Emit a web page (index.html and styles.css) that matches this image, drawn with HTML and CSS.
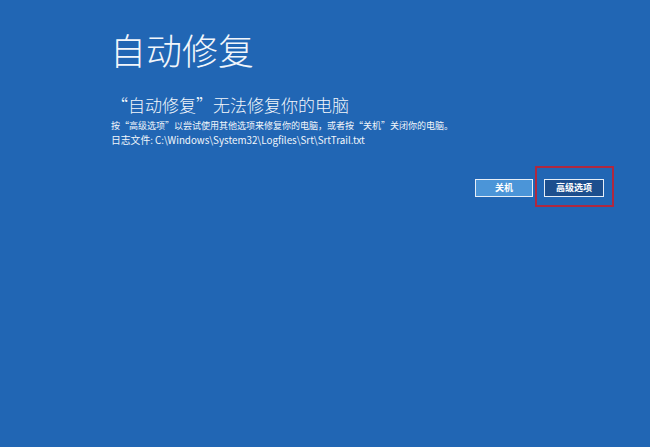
FILE: index.html
```html
<!DOCTYPE html>
<html lang="zh-CN">
<head>
<meta charset="utf-8">
<link rel="stylesheet" href="styles.css">
</head>
<body>
<div class="screen">
  <h1 class="title">自动修复</h1>
  <h2 class="subtitle">“自动修复”无法修复你的电脑</h2>
  <p class="line">按“高级选项”以尝试使用其他选项来修复你的电脑，或者按“关机”关闭你的电脑。</p>
  <p class="line line-log">日志文件: C:\Windows\System32\Logfiles\Srt\SrtTrail.txt</p>
  <div class="actions">
    <button class="btn btn-shutdown">关机</button>
    <div class="highlight">
      <button class="btn btn-advanced">高级选项</button>
    </div>
  </div>
</div>
</body>
</html>
```
FILE: styles.css
```css
html, body {
  margin: 0;
  padding: 0;
  width: 650px;
  height: 447px;
  overflow: hidden;
  background: #2166b4;
}
.screen {
  box-sizing: border-box;
  width: 650px;
  height: 447px;
  padding: 25px 0 0 110px;
  color: #f2f6fb;
  font-family: "Noto Sans CJK SC", "Liberation Sans", sans-serif;
}
.title {
  margin: 0;
  font-size: 36px;
  font-weight: 300;
  line-height: 48px;
}
.subtitle {
  margin: 21px 0 0 1px;
  font-size: 17px;
  font-weight: 300;
  line-height: 22px;
}
.line {
  margin: 0 0 0 1px;
  font-size: 9px;
  line-height: 14px;
}
.line:first-of-type {
  margin-top: 3px;
}
.line-log {
  font-size: 9.8px;
}
.actions {
  display: flex;
  align-items: flex-start;
  margin: 19px 0 0 365px;
}
.btn {
  box-sizing: border-box;
  height: 18px;
  border: 1.5px solid #e6eef8;
  color: #ffffff;
  font-family: "Noto Sans CJK SC", sans-serif;
  font-size: 9px;
  font-weight: 700;
  padding: 0;
  line-height: 14px;
}
.btn-shutdown {
  width: 58px;
  margin-top: 13px;
  background: #4b95d8;
}
.highlight {
  margin-left: 2px;
  border: 2px solid #b0283f;
  padding: 11px 8px 8px 7px;
  display: flex;
}
.btn-advanced {
  width: 60px;
  background: #1d4f8e;
}
```
